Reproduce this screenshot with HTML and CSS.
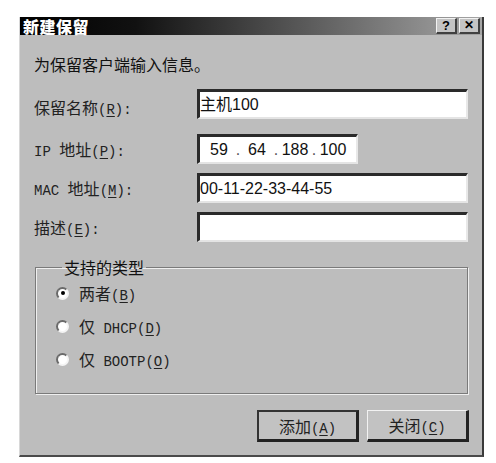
FILE: index.html
```html
<!DOCTYPE html>
<html lang="zh-CN">
<head>
  <meta charset="UTF-8">
  <title>新建保留</title>
  <link rel="stylesheet" href="styles.css">
</head>
<body>
  <div class="dialog">
    <div class="titlebar">
      <span class="title">新建保留</span>
      <div class="title-btns">
        <span class="tbtn">?</span>
        <span class="tbtn tbtn-x">&#x2715;</span>
      </div>
    </div>
    <div class="content">
      <p class="intro">为保留客户端输入信息。</p>
      <div class="form">
        <label class="label">保留名称<span class="lat">(<u>R</u>):</span></label>
        <div class="field field-first">主机100</div>
        <label class="label"><span class="lat">IP </span>地址<span class="lat">(<u>P</u>):</span></label>
        <div class="field field-ip">
          <span class="seg">59</span><span class="dot">.</span><span class="seg">64</span><span class="dot">.</span><span class="seg">188</span><span class="dot">.</span><span class="seg">100</span>
        </div>
        <label class="label"><span class="lat">MAC </span>地址<span class="lat">(<u>M</u>):</span></label>
        <div class="field">00-11-22-33-44-55</div>
        <label class="label">描述<span class="lat">(<u>E</u>):</span></label>
        <div class="field"></div>
      </div>
      <fieldset class="group">
        <legend>支持的类型</legend>
        <div class="radio-row"><span class="radio checked"></span><span class="label">两者<span class="lat">(<u>B</u>)</span></span></div>
        <div class="radio-row"><span class="radio"></span><span class="label">仅<span class="lat"> DHCP(<u>D</u>)</span></span></div>
        <div class="radio-row"><span class="radio"></span><span class="label">仅<span class="lat"> BOOTP(<u>O</u>)</span></span></div>
      </fieldset>
      <div class="actions">
        <button class="btn btn-default">添加<span class="lat">(<u>A</u>)</span></button>
        <button class="btn">关闭<span class="lat">(<u>C</u>)</span></button>
      </div>
    </div>
  </div>
</body>
</html>
```

FILE: styles.css
```css
* {
  margin: 0;
  padding: 0;
  box-sizing: border-box;
}

body {
  background: #fff;
  font-family: "Noto Sans CJK SC", sans-serif;
  color: #111;
}

.dialog {
  margin: 17px 0 0 19px;
  width: 465px;
  height: 440px;
  background: #bdbdbd;
  border-left: 1px solid #d8d8d8;
  border-right: 2px solid #3a3a3a;
  border-bottom: 2px solid #4a4a4a;
  display: flex;
  flex-direction: column;
}

.titlebar {
  height: 18px;
  background: linear-gradient(90deg, #000 0%, #111 25%, #a6a6a6 100%);
  display: flex;
  align-items: center;
  justify-content: space-between;
  padding: 0 2px 0 3px;
}

.title {
  color: #fff;
  font-weight: 900;
  font-size: 16px;
  line-height: 18px;
  letter-spacing: 0.5px;
}

.title-btns {
  display: flex;
  gap: 2px;
}

.tbtn {
  width: 21px;
  height: 16px;
  background: #c4c4c4;
  border-top: 1px solid #f2f2f2;
  border-left: 1px solid #f2f2f2;
  border-right: 2px solid #404040;
  border-bottom: 2px solid #404040;
  font: 700 13px/13px "Liberation Sans", sans-serif;
  text-align: center;
  color: #000;
}

.tbtn-x {
  font-size: 12px;
}

.content {
  padding: 19px 13px 0 14px;
  flex: 1;
  display: flex;
  flex-direction: column;
}

.intro {
  font-size: 16px;
  line-height: 20px;
}

.form {
  margin-top: 15px;
  display: grid;
  grid-template-columns: 163px 271px;
  row-gap: 9px;
  align-items: center;
}

.label {
  font-size: 16px;
  color: #222;
}

.lat {
  font-family: "Liberation Mono", monospace;
  font-size: 14px;
}

.lat u {
  text-underline-offset: 2px;
}

.field {
  height: 30px;
  background: #fff;
  border-top: 3px solid #2a2a2a;
  border-left: 3px solid #2a2a2a;
  border-right: 2px solid #e8e8e8;
  border-bottom: 2px solid #e4e4e4;
  font: 16px/25px "Liberation Sans", "Noto Sans CJK SC", sans-serif;
  color: #111;
  white-space: nowrap;
  overflow: hidden;
}

.field-first {
  margin-bottom: 6px;
}

.field-ip {
  width: 161px;
  display: flex;
  padding-left: 3px;
}

.field-ip .seg {
  width: 32px;
  text-align: center;
}

.field-ip .dot {
  width: 6px;
  text-align: center;
  color: #555;
}

.group {
  margin: 15px 0 0 1px;
  width: 433px;
  height: 137px;
  border: 1px solid #7a7a7a;
  box-shadow: inset 1px 1px 0 #efefef, 1px 1px 0 #efefef;
  padding: 6px 0 0 20px;
  display: flex;
  flex-direction: column;
  gap: 13px;
}

.group legend {
  margin-left: 6px;
  padding: 0 2px;
  font-size: 16px;
  line-height: 20px;
}

.radio-row {
  display: flex;
  align-items: center;
  gap: 10px;
  height: 20px;
}

.radio {
  width: 13px;
  height: 13px;
  border-radius: 50%;
  background: #fff;
  border: 2px solid;
  border-color: #6a6a6a #f4f4f4 #f4f4f4 #6a6a6a;
  display: flex;
  align-items: center;
  justify-content: center;
}

.radio.checked::after {
  content: "";
  width: 4px;
  height: 4px;
  border-radius: 50%;
  background: #000;
}

.actions {
  margin-top: 16px;
  display: flex;
  justify-content: flex-end;
  gap: 8px;
}

.btn {
  width: 102px;
  height: 32px;
  background: #c2c2c2;
  border-top: 1px solid #f2f2f2;
  border-left: 1px solid #f2f2f2;
  border-right: 3px solid #222;
  border-bottom: 3px solid #222;
  font-family: "Noto Sans CJK SC", sans-serif;
  font-size: 16px;
  color: #222;
}

.btn-default {
  border-top: 2px solid #333;
  border-left: 2px solid #333;
}
```
